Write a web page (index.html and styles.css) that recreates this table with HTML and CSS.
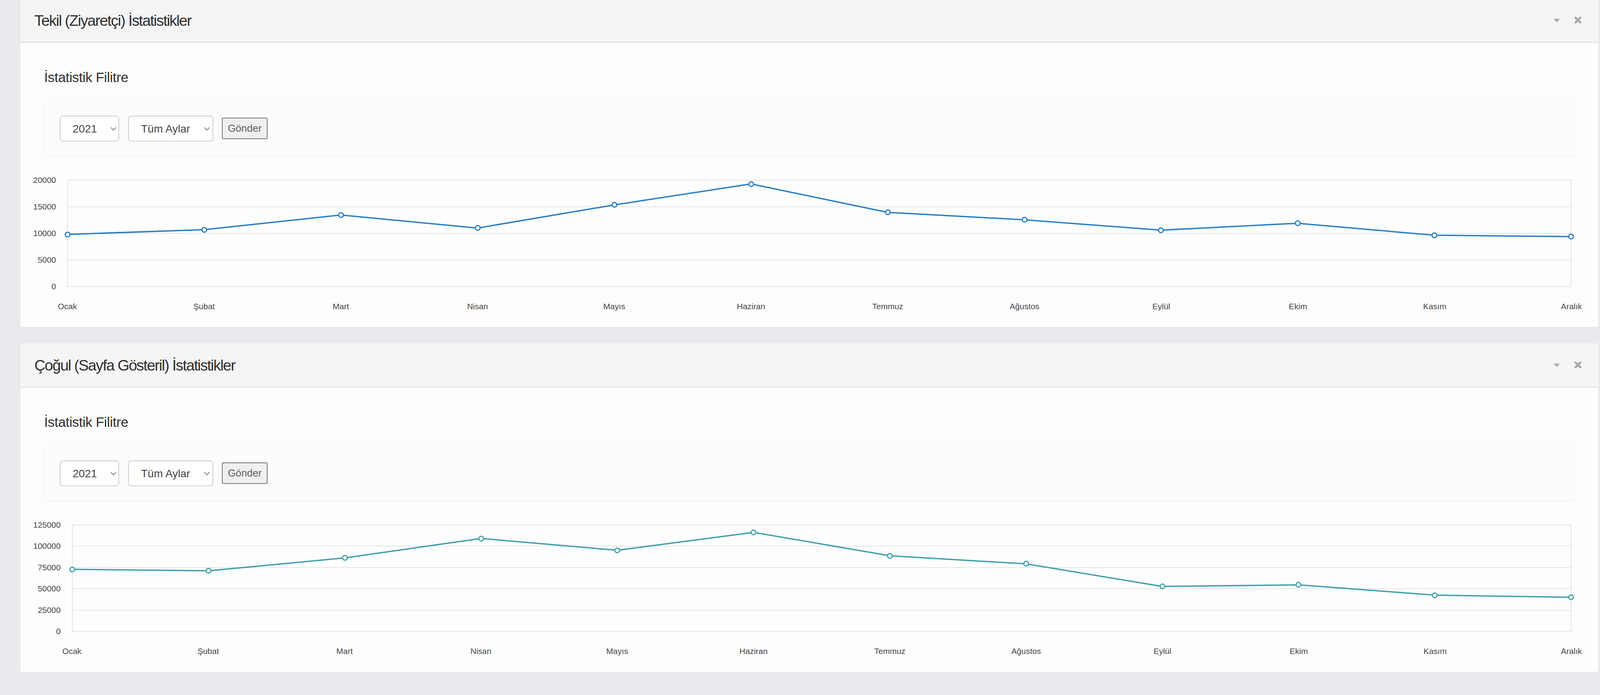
FILE: index.html
```html
<!DOCTYPE html>
<html lang="tr">
<head>
<meta charset="utf-8">
<title>İstatistikler</title>
<link rel="stylesheet" href="styles.css">
</head>
<body>
<div class="page">

  <section class="panel panel-first">
    <header class="panel-head">
      <h2 class="panel-title">Tekil (Ziyaretçi) İstatistikler</h2>
      <div class="panel-tools">
        <svg class="tool-caret" viewBox="0 0 16 9" width="16" height="9"><polygon points="0,0 16,0 8,9"/></svg>
        <svg class="tool-close" viewBox="0 0 19 19" width="19" height="19"><path d="M3.5 3.5 L15.5 15.5 M15.5 3.5 L3.5 15.5"/></svg>
      </div>
    </header>
    <div class="panel-body">
      <h3 class="filter-title">İstatistik Filitre</h3>
      <form class="well">
        <label class="select sel-year">
          <select><option>2021</option></select>
          <svg class="chev" viewBox="0 0 15 9" width="15" height="9"><path d="M1 1 L7.5 8 L14 1"/></svg>
        </label>
        <label class="select sel-month">
          <select><option>Tüm Aylar</option></select>
          <svg class="chev" viewBox="0 0 15 9" width="15" height="9"><path d="M1 1 L7.5 8 L14 1"/></svg>
        </label>
        <button type="button" class="btn">Gönder</button>
      </form>
    </div>
    <div class="chart chart-blue">
      <div class="ylabels">
        <span>20000</span><span>15000</span><span>10000</span><span>5000</span><span>0</span>
      </div>
      <div class="plot">
        <div class="gridrow"></div><div class="gridrow"></div><div class="gridrow"></div><div class="gridrow"></div>
        <div class="overlay">
          <svg class="lines" viewBox="0 0 1100 272" preserveAspectRatio="none">
            <polyline points="0,138.7 100,126.5 200,89.1 300,122.4 400,63.2 500,9.5 600,82.3 700,101.3 800,127.8 900,110.2 1000,140.8 1100,144.2"/>
          </svg>
          <span class="pt" style="left:0%;top:138.7px"></span>
          <span class="pt" style="left:9.0909%;top:126.5px"></span>
          <span class="pt" style="left:18.1818%;top:89.1px"></span>
          <span class="pt" style="left:27.2727%;top:122.4px"></span>
          <span class="pt" style="left:36.3636%;top:63.2px"></span>
          <span class="pt" style="left:45.4545%;top:9.5px"></span>
          <span class="pt" style="left:54.5454%;top:82.3px"></span>
          <span class="pt" style="left:63.6363%;top:101.3px"></span>
          <span class="pt" style="left:72.7272%;top:127.8px"></span>
          <span class="pt" style="left:81.8181%;top:110.2px"></span>
          <span class="pt" style="left:90.9090%;top:140.8px"></span>
          <span class="pt" style="left:100%;top:144.2px"></span>
        </div>
      </div>
      <div class="xlabels">
        <span>Ocak</span><span>Şubat</span><span>Mart</span><span>Nisan</span><span>Mayıs</span><span>Haziran</span><span>Temmuz</span><span>Ağustos</span><span>Eylül</span><span>Ekim</span><span>Kasım</span><span>Aralık</span>
      </div>
    </div>
  </section>

  <section class="panel">
    <header class="panel-head">
      <h2 class="panel-title">Çoğul (Sayfa Gösteril) İstatistikler</h2>
      <div class="panel-tools">
        <svg class="tool-caret" viewBox="0 0 16 9" width="16" height="9"><polygon points="0,0 16,0 8,9"/></svg>
        <svg class="tool-close" viewBox="0 0 19 19" width="19" height="19"><path d="M3.5 3.5 L15.5 15.5 M15.5 3.5 L3.5 15.5"/></svg>
      </div>
    </header>
    <div class="panel-body">
      <h3 class="filter-title">İstatistik Filitre</h3>
      <form class="well">
        <label class="select sel-year">
          <select><option>2021</option></select>
          <svg class="chev" viewBox="0 0 15 9" width="15" height="9"><path d="M1 1 L7.5 8 L14 1"/></svg>
        </label>
        <label class="select sel-month">
          <select><option>Tüm Aylar</option></select>
          <svg class="chev" viewBox="0 0 15 9" width="15" height="9"><path d="M1 1 L7.5 8 L14 1"/></svg>
        </label>
        <button type="button" class="btn">Gönder</button>
      </form>
    </div>
    <div class="chart chart-teal">
      <div class="ylabels">
        <span>125000</span><span>100000</span><span>75000</span><span>50000</span><span>25000</span><span>0</span>
      </div>
      <div class="plot">
        <div class="gridrow"></div><div class="gridrow"></div><div class="gridrow"></div><div class="gridrow"></div><div class="gridrow"></div>
        <div class="overlay">
          <svg class="lines" viewBox="0 0 1100 272" preserveAspectRatio="none">
            <polyline points="0,113.6 100,117.3 200,84.2 300,34.6 400,64.8 500,18.9 600,78.8 700,99.4 800,157.3 900,153.2 1000,179.5 1100,185"/>
          </svg>
          <span class="pt" style="left:0%;top:113.6px"></span>
          <span class="pt" style="left:9.0909%;top:117.3px"></span>
          <span class="pt" style="left:18.1818%;top:84.2px"></span>
          <span class="pt" style="left:27.2727%;top:34.6px"></span>
          <span class="pt" style="left:36.3636%;top:64.8px"></span>
          <span class="pt" style="left:45.4545%;top:18.9px"></span>
          <span class="pt" style="left:54.5454%;top:78.8px"></span>
          <span class="pt" style="left:63.6363%;top:99.4px"></span>
          <span class="pt" style="left:72.7272%;top:157.3px"></span>
          <span class="pt" style="left:81.8181%;top:153.2px"></span>
          <span class="pt" style="left:90.9090%;top:179.5px"></span>
          <span class="pt" style="left:100%;top:185px"></span>
        </div>
      </div>
      <div class="xlabels">
        <span>Ocak</span><span>Şubat</span><span>Mart</span><span>Nisan</span><span>Mayıs</span><span>Haziran</span><span>Temmuz</span><span>Ağustos</span><span>Eylül</span><span>Ekim</span><span>Kasım</span><span>Aralık</span>
      </div>
    </div>
  </section>

</div>
</body>
</html>
```

FILE: styles.css
```css
html, body {
  margin: 0;
  padding: 0;
}

body {
  background: #e9eaed;
  font-family: "Liberation Sans", Arial, sans-serif;
  color: #333;
  overflow: hidden;
}

.page {
  padding: 0 4px 0 52px;
  display: flex;
  flex-direction: column;
  gap: 41px;
}

.panel {
  background: #fdfdfd;
  border-radius: 6px;
  box-shadow: 0 1px 3px rgba(0, 0, 0, 0.08);
  overflow: hidden;
}

.panel-first {
  margin-top: -4px;
}

/* header */
.panel-head {
  height: 111px;
  background: #f5f5f5;
  border-bottom: 2px solid #d9d9d9;
  display: flex;
  align-items: center;
  justify-content: space-between;
  padding: 0 43px 0 36px;
}

.panel-title {
  margin: 0;
  padding-top: 3px;
  font-size: 39px;
  font-weight: normal;
  letter-spacing: -1.8px;
  color: #2e2e30;
  line-height: 44px;
}

.panel-tools {
  display: flex;
  align-items: center;
  gap: 37px;
}

.tool-caret {
  display: block;
  fill: #adadad;
  margin-top: 1px;
}

.tool-close {
  display: block;
  fill: none;
  stroke: #a9a9a9;
  stroke-width: 5.5;
  stroke-linecap: round;
}

/* body + filter */
.panel-body {
  padding: 0 60px;
}

.filter-title {
  margin: 69px 0 0 1px;
  font-size: 35px;
  line-height: 40px;
  font-weight: normal;
  letter-spacing: -0.35px;
  color: #2e2e30;
}

.well {
  margin: 39px 0 30px;
  height: 143px;
  box-sizing: border-box;
  background: #fcfcfc;
  border: 1px solid #f3f3f3;
  border-radius: 8px;
  box-shadow: 0 1px 2px rgba(0, 0, 0, 0.05);
  padding: 0 40px;
  display: flex;
  align-items: center;
  gap: 23px;
}

.select {
  position: relative;
  display: block;
  margin-top: 1px;
}

.select select {
  -webkit-appearance: none;
  appearance: none;
  display: block;
  height: 66px;
  box-sizing: border-box;
  border: 2px solid #cdcdcd;
  border-radius: 8px;
  background: #fff;
  font-family: "Liberation Sans", Arial, sans-serif;
  font-size: 28px;
  color: #444;
  padding: 0 0 0 31px;
  margin: 0;
  outline: none;
}

.sel-year select {
  width: 152px;
}

.sel-month select {
  width: 218px;
}

.chev {
  position: absolute;
  top: 29px;
  right: 7px;
  fill: none;
  stroke: #555;
  stroke-width: 1.6;
  pointer-events: none;
}

.sel-month .chev {
  right: 9px;
}

.btn {
  width: 117px;
  height: 55px;
  box-sizing: border-box;
  margin: 0 0 0 -1px;
  padding: 0;
  background: #efefef;
  border: 2px solid #767676;
  border-radius: 4px;
  font-family: "Liberation Sans", Arial, sans-serif;
  font-size: 26px;
  color: #5c5c5c;
}

/* chart */
.chart {
  display: grid;
  grid-template-columns: auto 1fr 69px;
  grid-template-rows: 274px auto;
  padding: 30px 0 41px;
  font-size: 21px;
  color: #444;
}

.ylabels {
  grid-column: 1;
  grid-row: 1;
  margin: -11px 0;
  padding: 0 29px 0 33px;
  display: flex;
  flex-direction: column;
  justify-content: space-between;
  align-items: flex-end;
}

.ylabels span {
  display: block;
  line-height: 24px;
  height: 24px;
  white-space: nowrap;
}

.plot {
  grid-column: 2;
  grid-row: 1;
  position: relative;
  border: 2px solid #e4e4e4;
  display: flex;
  flex-direction: column;
}

.gridrow {
  flex: 1 1 0;
}

.gridrow + .gridrow {
  border-top: 2px solid #e4e4e4;
}

.overlay {
  position: absolute;
  top: -1px;
  bottom: -1px;
  left: -1px;
  right: -1px;
}

.lines {
  position: absolute;
  top: 0;
  left: 0;
  width: 100%;
  height: 100%;
  overflow: visible;
}

.lines polyline {
  fill: none;
  stroke-width: 3.5;
  stroke-linejoin: round;
  vector-effect: non-scaling-stroke;
}

.pt {
  position: absolute;
  width: 15px;
  height: 15px;
  box-sizing: border-box;
  border: 3px solid;
  border-radius: 50%;
  background: #fff;
  transform: translate(-50%, -50%);
}

.xlabels {
  grid-column: 2;
  grid-row: 2;
  margin: 38px calc(-100% / 22) 0;
  display: flex;
}

.xlabels span {
  flex: 1 1 0;
  text-align: center;
  white-space: nowrap;
  line-height: 24px;
}

.chart-blue polyline {
  stroke: #2a7fc4;
}

.chart-blue .pt {
  border-color: #2a7fc4;
}

.chart-teal polyline {
  stroke: #40a0a8;
}

.chart-teal .pt {
  border-color: #40a0a8;
}
```
